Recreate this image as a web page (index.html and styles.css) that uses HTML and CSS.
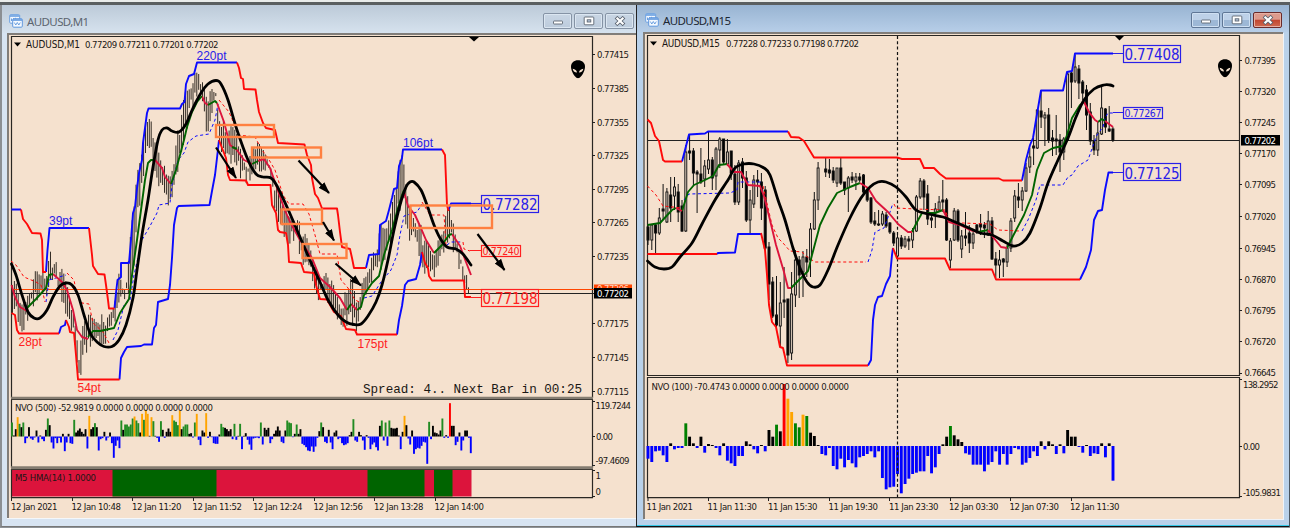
FILE: index.html
```
<!DOCTYPE html>
<html lang="en">
<head>
<meta charset="UTF-8" />
<meta name="viewport" content="width=device-width, initial-scale=1" />
<title>AUDUSD</title>
<link rel="stylesheet" href="styles.css">
</head>
<body>
<svg class="defs" width="0" height="0">
  <symbol id="ico-chart" viewBox="0 0 14 14">
    <rect x=".7" y=".7" width="10" height="8.5" rx="1" fill="#f4f9ff" stroke="#6a9fe0" />
    <path d="M1 2h9.500" stroke="#6a9fe0" stroke-width="1.600" />
    <path d="M2.500 7V4.500M4.500 6V4M6.500 5V3.800" stroke="#6a9fe0" />
    <rect x="3.700" y="4.700" width="9.600" height="8.500" rx="1" fill="#f4f9ff" stroke="#5f97dd" />
    <path d="M4 6h9" stroke="#5f97dd" stroke-width="1.600" />
    <path d="M5.300 8.500l1.500 2.500 1.500-2.500 1.500 2.500 1.500-2.500" fill="none" stroke="#5f97dd" stroke-width=".9" />
  </symbol>
  <symbol id="ico-min" viewBox="0 0 12 10">
    <rect x="1.500" y="5" width="9" height="3" rx=".6" fill="#fff" stroke="#5b6470" stroke-width=".9" />
  </symbol>
  <symbol id="ico-max" viewBox="0 0 12 10">
    <rect x="1.200" y="1" width="9.600" height="7.800" rx=".8" fill="#fff" stroke="#5b6470" stroke-width=".9" />
    <rect x="4.200" y="3.800" width="3.600" height="2.200" fill="#b9cbe0" stroke="#5b6470" stroke-width=".9" />
  </symbol>
  <symbol id="ico-close" viewBox="0 0 12 10">
    <path d="M2 1.200L10 8.800M10 1.200L2 8.800" stroke="#5b6470" stroke-width="3.800" />
    <path d="M2.600 1.800L9.400 8.200M9.400 1.800L2.600 8.200" stroke="#fff" stroke-width="2.200" />
  </symbol>
  <symbol id="alien" viewBox="0 0 14 18">
    <path d="M7 0C11 0 14 2.600 14 6.500C14 11 10 18 7 18S0 11 0 6.500C0 2.600 3 0 7 0Z" />
    <path d="M1.700 8.500C4 8.800 5.800 10 6 12.200C3.600 12.200 1.900 10.800 1.700 8.500ZM12.300 8.500C10 8.800 8.200 10 8 12.200C10.400 12.200 12.100 10.800 12.300 8.500Z" fill="#f5e1ce" />
  </symbol>
  <marker id="head" markerUnits="userSpaceOnUse" markerWidth="13" markerHeight="10" refX="11" refY="4" orient="auto">
    <path d="M0 0L12 4L0 8Z" />
  </marker>
</svg>

<main class="workspace">
  <section class="window window-m1">
    <header class="titlebar">
      <svg class="app-icon"><use href="#ico-chart" /></svg>
      <h1>AUDUSD,M1</h1>
      <div class="buttons">
        <button aria-label="Minimize"><svg><use href="#ico-min" /></svg></button>
        <button aria-label="Maximize"><svg><use href="#ico-max" /></svg></button>
        <button aria-label="Close"><svg><use href="#ico-close" /></svg></button>
      </div>
    </header>
    <div class="client">
      <svg class="pane" viewBox="9 35 626 363" width="626" height="363">
        <path class="frame" d="M11.500 398V36.500H592.500V398" />
        <path class="sep" d="M11 397.800H593" />
        <path class="tick" d="M592 54.500h3M592 88.500h3M592 122.500h3M592 155.500h3M592 189.500h3M592 222.500h3M592 256.500h3M592 323.500h3M592 357.500h3M592 391.500h3" />
        <path d="M469 37h10l-5 4.500z" />
        <path d="M14 42.500h7l-3.500 4z" />
        <text class="t head" x="26" y="47.500" textLength="54">AUDUSD,M1</text>
        <text class="t" x="85" y="47.500" textLength="133.500">0.77209 0.77211 0.77201 0.77202</text>
        <g class="t">
          <text x="597" y="58" textLength="32">0.77415</text>
          <text x="597" y="92" textLength="32">0.77385</text>
          <text x="597" y="126" textLength="32">0.77355</text>
          <text x="597" y="159" textLength="32">0.77325</text>
          <text x="597" y="193" textLength="32">0.77295</text>
          <text x="597" y="226" textLength="32">0.77265</text>
          <text x="597" y="260" textLength="32">0.77235</text>
          <text x="597" y="327" textLength="32">0.77175</text>
          <text x="597" y="361" textLength="32">0.77145</text>
          <text x="597" y="395" textLength="32">0.77115</text>
        </g>

        <g id="bars-m1" class="bars"></g>
        <path stroke="#ff4500" d="M12 289.500H594" />
        <path stroke="#222" d="M12 293.500H594" />

        <g class="dash up">
          <path d="M46 302L49 280L66 275M113 340L118 330L124 305L130 300L134 275L142 240L150 226L157 213L159 205L170 203L172 185L178 160L184 153L188 142L196 136L209 134L215 120L218 104" />
          <path d="M364 298L372 296L381 282L391 270L397 255L400 235L404 216L417 212L422 204M447 245L451 242L461 242" />
        </g>
        <g class="dash down">
          <path d="M11 261L16 265L24 277L36 282L41 285L45 302M67 273L74 280L77 295L82 303L89 304L93 323L103 332L109 343" />
          <path d="M219 100L229 112L239 135L255 137L262 150L268 158L275 170L283 195L289 204L303 204L309 214L315 235L320 254L337 254L341 280L348 288L355 300L362 303" />
          <path d="M422 202L430 215L444 215L446 245M463 242L464 249L470 251" />
        </g>

        <g class="hma fall">
          <path d="M11.500 285L15 297L20 307L27 311M53 274L62 282L67 290L73 310L77 330L82 337L88 339M155 160L162 168L165 177L171 184M202 96L205 103L208 105M217 103L224 122L230 145L237 150L244 160L252 164" />
          <path d="M258 161L264 159L270 168L276 185L284 208L290 222L300 240L312 258L320 278L330 287L340 298L347 310M351 304L357 310M404 192L408 206L415 215L420 226L426 240L434 253M452 234L460 246L466 262L471 275" />
        </g>
        <g class="hma rise">
          <path d="M27 308L36 299L46 288L49 275L53 274M88 337L93 331L100 331L114 328L120 313L129 299L132 275L137 240L141 210L145 180L148 163L151 160L155 160M171 184L176 170L180 155L184 140L187 127L192 112L197 102L202 96M208 105L215 101L217 103M232 147L237 149M252 164L258 161" />
          <path d="M347 310L351 304M357 310L361 307L364 295L372 283L379 276L384 255L392 230L398 208L402 195L404 190M434 253L442 245L449 235L452 234" />
        </g>

        <g class="band up">
          <path d="M11.500 209.500H21M46 272L47.500 250L49.500 228H89M114.500 308L116 293L117.500 280L121 277V263H129L131 240L133 213L135 207L137 188L139 173L142 160L143 143L147 113L148.500 108.500H180L182 104L184.500 102L186 84L189 76L194 74L197 62.500H237" />
          <path d="M366 268L369 255L379 254L380 225L386 221L389 210L392 198L394 189L397 188L399 166L402 158L403 149.500H442M448.500 210L451 203.500H471" />
          <path d="M59 333.500L61 327L65 325L66 320M119.500 379.500L121 358L124 352L127 347L141 346L144 344.500H152L154 328L156 325L158 302L168 299L170 285L172 258L174 225L177 208L178.500 206L209.500 205L212 191L215 175L217 158L219 140M397 334.500L399 320L402 306L405 285L408 281L416 279L420 265L422 252" />
        </g>
        <g class="band down">
          <path d="M21 209.500L23 219L27 224L32 233L40.500 233.500L42 240L43 272H46M89 228L92 255L93 266L98 274L104.500 274.500L106 285L108 300L109 308.500H114.500" />
          <path d="M237 62.500L239 68L241 78L243 79L244 89L255.500 89.500L257 100L259 112L263 123L266 128L275 130L278 143L304.500 144.500L307 155L311 165L312 178L315 194L318 198L322 208.500H337L338 215L340 232L342 247L350 249L352 258L354 268H366M442 149.500L445 155L446 180L447 205L448.500 211" />
          <path d="M11.500 313L15 315L17 330L19 333.500H59M66 320L69 327L70 332L74 333L76 355L78 379.500H119.500M219 140L222 148L226 158L228 175L230 180L246 180.500L248 185H270.500L272 205L276 213L278 230L280 232L286 233L288 245L289 262L301 263L304 272L314 273L316 285L320 299L327 299.500L334 312L341 316L346 329L355 330L357 334.500H397M422 252L425 263L428 268L429 276L432 280.500H464L465 297H471" />
        </g>
        <path class="ma" d="M11.500 264L16 275L22 295L28 312L34 318L40 318L47 310L53 297L60 286L66 283L72 285L78 295L84 315L90 333L97 342L104 346.500L112 346.500L119 340L126 325L133 298L137 270L142 235L148 200L153 167L158 140L162 130L167 128L172 131L179 132L186 124L193 108L201 93L208 84L216 80.500L221 84L228 100L237 130L248 160L256 174L263 177L271 178L277 186L287 207L297 230L309 258L320 282L328 300L338 315L346 322L354 324.500L361 324L368 316L376 302L382 285L388 260L394 230L400 205L406 187L410 182L414 182L421 190L427 205L434 225L440 238L447 247L456 249L463 254L471 265" />

        <g class="pt up-text">
          <text x="196.500" y="60">220pt</text>
          <text x="49" y="225">39pt</text>
          <text x="403" y="147">106pt</text>
        </g>
        <g class="pt down-text">
          <text x="18.500" y="346">28pt</text>
          <text x="77.500" y="392">54pt</text>
          <text x="357.500" y="347.500">175pt</text>
        </g>

        <g class="tag up-tag">
          <path d="M471 203.500H481" />
          <rect x="481.500" y="195.500" width="57" height="17" />
          <text class="big" x="482.500" y="209.500" textLength="55">0.77282</text>
        </g>
        <g class="tag down-tag">
          <path d="M470 250.500H481M470 297.500H481" />
          <rect x="481.500" y="245.500" width="39" height="11" />
          <text class="mid" x="482.500" y="254.800" textLength="37">0.77240</text>
          <rect x="481.500" y="289.500" width="57" height="17" />
          <text class="big" x="482.500" y="303.700" textLength="55">0.77198</text>
        </g>

        <g class="zone">
          <rect x="216" y="125" width="58" height="12" />
          <rect x="252" y="147.500" width="69" height="10" />
          <rect x="281.500" y="209.500" width="40.500" height="14.500" />
          <rect x="302.500" y="244" width="44" height="14" />
          <rect x="410.500" y="205.500" width="81.500" height="22.500" />
        </g>
        <g class="arrow">
          <path d="M216 147.500L236 178" />
          <path d="M298.500 160.500L329 193" />
          <path d="M323 222L334 240.500" />
          <path d="M335.500 263.500L361 285.500" />
          <path d="M477.500 234L504.500 270" />
        </g>

        <text class="spread" x="363" y="393" textLength="219">Spread: 4.. Next Bar in 00:25</text>
        <use href="#alien" x="571" y="60" width="14" height="18.500" />
        <rect x="594" y="284.500" width="38" height="6" fill="#ff4500" />
        <text class="t ask" x="597" y="291.500" textLength="32">0.77206</text>
        <rect x="594" y="288" width="38" height="10.500" />
        <text class="t now" x="597" y="297" textLength="32">0.77202</text>
      </svg>

      <svg class="pane" viewBox="9 398 626 70" width="626" height="70">
        <path class="frame" d="M11.500 400V468M11 399.500H593M592.500 399.500V468" />
        <path class="sep" d="M11 398.300H593M11 467.300H593" />
        <path class="tick" d="M592 401.500h3M592 436.500h3M592 465.500h3" />
        <g id="nvo-m1"></g>
        <text class="t" x="15" y="411" textLength="198">NVO (500) -52.9819 0.0000 0.0000 0.0000 0.0000</text>
        <text class="t" x="595.500" y="409" textLength="35.500">119.7244</text>
        <text class="t" x="596" y="440" textLength="17">0.00</text>
        <text class="t" x="595.500" y="464" textLength="34">-97.4609</text>
      </svg>

      <svg class="pane" viewBox="9 468 626 30" width="626" height="30">
        <rect class="fall-fill" x="12" y="470" width="459.500" height="26.500" />
        <path class="rise-fill" d="M112.500 470H216.500V496.500H112.500ZM367.500 470H424.500V496.500H367.500ZM434 470H452.500V496.500H434Z" />
        <path class="frame" d="M11.500 469V498M11 469.500H593M592.500 469.500V498M11 497.700H593" />
        <path class="sep" d="M11 468.200H593" />
        <path class="tick" d="M592 470.500h3M592 496.500h3" />
        <text class="t" x="15" y="481" textLength="81">M5 HMA(14) 1.0000</text>
        <text class="t" x="595.500" y="479">1</text>
        <text class="t" x="595.500" y="495">0</text>
      </svg>

      <svg class="pane" viewBox="9 498 626 20" width="626" height="20">
        <path class="tick" d="M11.500 498v3M72.500 498v3M132.500 498v3M193.500 498v3M253.500 498v3M314.500 498v3M374.500 498v3M435.500 498v3" />
        <g class="t">
          <text x="11" y="510" textLength="46.500">12 Jan 2021</text>
          <text x="71.500" y="510" textLength="49.500">12 Jan 10:48</text>
          <text x="132" y="510" textLength="49.500">12 Jan 11:20</text>
          <text x="192.500" y="510" textLength="49.500">12 Jan 11:52</text>
          <text x="253" y="510" textLength="49.500">12 Jan 12:24</text>
          <text x="313.500" y="510" textLength="49.500">12 Jan 12:56</text>
          <text x="374" y="510" textLength="49.500">12 Jan 13:28</text>
          <text x="434.500" y="510" textLength="49.500">12 Jan 14:00</text>
        </g>
      </svg>
    </div>
  </section>

  <section class="window window-m15 active">
    <header class="titlebar">
      <svg class="app-icon"><use href="#ico-chart" /></svg>
      <h1>AUDUSD,M15</h1>
      <div class="buttons">
        <button aria-label="Minimize"><svg><use href="#ico-min" /></svg></button>
        <button aria-label="Maximize"><svg><use href="#ico-max" /></svg></button>
        <button class="close" aria-label="Close"><svg><use href="#ico-close" /></svg></button>
      </div>
    </header>
    <div class="client">
      <svg class="pane" viewBox="645 34 638 342" width="638" height="342">
        <path class="frame" d="M647.500 375.500V35.500H1239.500V375.500Z" />
        <path class="tick" d="M1239 60.500h3M1239 91.500h3M1239 122.500h3M1239 153.500h3M1239 184.500h3M1239 216.500h3M1239 248.500h3M1239 279.500h3M1239 310.500h3M1239 341.500h3M1239 373.500h3" />
        <path d="M1115 36h9l-4.500 4.500z" />
        <path d="M650 41.500h7l-3.500 4z" />
        <text class="t head" x="662" y="46.500" textLength="58">AUDUSD,M15</text>
        <text class="t" x="726" y="46.500" textLength="133">0.77228 0.77233 0.77198 0.77202</text>
        <g class="t">
          <text x="1244.500" y="63.500" textLength="31.500">0.77395</text>
          <text x="1244.500" y="94.500" textLength="31.500">0.77320</text>
          <text x="1244.500" y="126" textLength="31.500">0.77245</text>
          <text x="1244.500" y="157" textLength="31.500">0.77170</text>
          <text x="1244.500" y="188" textLength="31.500">0.77095</text>
          <text x="1244.500" y="220" textLength="31.500">0.77020</text>
          <text x="1244.500" y="251.500" textLength="31.500">0.76945</text>
          <text x="1244.500" y="283" textLength="31.500">0.76870</text>
          <text x="1244.500" y="314" textLength="31.500">0.76795</text>
          <text x="1244.500" y="345" textLength="31.500">0.76720</text>
          <text x="1244.500" y="375.800" textLength="31.500">0.76645</text>
        </g>
        <path stroke="#222" d="M648 140.500H1239" />
        <path class="day" d="M897.500 36V375" />

        <g id="candles-m15" class="candles"></g>

        <g class="dash up">
          <path d="M684 200L689 194L730 193L737 190L738 182H761M868 262L872 250L875 232L884 228L890 212L893 203" />
          <path d="M1022 231L1028 220L1036 200L1040 185H1063L1068 177L1072 175L1078 166L1088 160L1095 140L1097 135L1103 127L1105 118L1108 113H1113" />
        </g>
        <g class="dash down">
          <path d="M647.500 186L656 195L663 206L682 208M763 186L772 225L778 238L783 243L790 251L802 252L806 256L815 262H866" />
          <path d="M894 204L896 208L916 209L945 210L950 222L962 223L990 224L998 230L1020 231" />
        </g>
        <g class="hma rise">
          <path d="M647.500 225L660 223L672 210L676 208M682 211L688 192L694 185L705 180L713 176L719 165L727 164M791 288L800 279L808 271L812 255L820 225L828 208L837 193L850 187L860 183M912 232L917 222L922 213L935 213L943 210M978 232L988 230" />
          <path d="M1007 248L1013 236L1024 215L1032 195L1037 170L1044 153L1053 148L1063 146L1067 135L1072 118L1080 105L1084 102M1098 122L1102 119L1105 121" />
        </g>
        <g class="hma fall">
          <path d="M676 208L682 211M727 164L734 172L741 172L748 185L760 186L764 196L770 220L776 245L784 272L788 288L791 288M860 183L868 188L876 201L888 212L898 224L908 232L912 232M943 210L949 222L960 225L970 230L978 232M988 230L993 237L1001 247L1007 248M1084 102L1089 112L1095 120L1098 122M1105 121L1113 127" />
        </g>
        <g class="band up">
          <path d="M682 161.500L685 150L689 134.500L705 133.500L708 131.500H788M1022 180.500L1026 160L1030 145L1033 138L1036 120L1041 90.500H1063L1067 72L1072 71L1075 53.500H1113" />
          <path d="M717 254L718 253L735 252.500L738 234H761M868 365.500L871 360L873 320L875 305L878 297L882 296L886 284L890 276L892 255L893 248M1080 279.500L1086 267L1091 250L1094 220L1098 211L1102 210L1105 190L1108.500 172.500H1113" />
        </g>
        <g class="band down">
          <path d="M647.500 119.500L651 123L655 136L659 141L663 160L665 161.500H682M788 131.500L791 137L799 137.500L804 141L814 157.500H897L902 159H920L924 168H934L940 174L946 178.500H999L1003 180.500H1022" />
          <path d="M647.500 254H717M761 233L765 250L767 275L769 305L772 322L776 327L780 347L783 348L787 365.500H868M893 248L897 258.500H945L950 269.500H992L996 279.500H1080" />
        </g>
        <path class="ma" d="M647.500 261L655 267L664 269L672 267L680 257L692 243L702 224L715 200L728 180L735 168L744 164L754 164L764 168L770 175L778 200L785 220L793 248L800 268L807 282L813 287L820 285L828 270L838 245L850 218L861 198L870 187L878 182L886 182L896 187L906 197L916 210L928 214L943 217L955 222L969 228L980 233L992 235L1003 241L1013 246L1022 243L1030 233L1040 208L1048 183L1058 160L1068 138L1076 117L1084 100L1094 89L1104 85L1110 85L1113 86" />

        <g class="tag up-tag">
          <path d="M1113 53.500H1123M1113 112.500H1123M1113 172.500H1123" />
          <rect x="1123.500" y="45.500" width="57" height="17" />
          <text class="big" x="1124.500" y="60" textLength="55">0.77408</text>
          <rect x="1123.500" y="107.500" width="39" height="11" />
          <text class="mid" x="1124.500" y="117" textLength="37">0.77267</text>
          <rect x="1123.500" y="163.500" width="57" height="17" />
          <text class="big" x="1124.500" y="178.500" textLength="55">0.77125</text>
        </g>
        <use href="#alien" x="1218" y="59" width="14" height="18.500" />
        <rect x="1241" y="135" width="39" height="10.500" />
        <text class="t now" x="1244.500" y="144" textLength="31.500">0.77202</text>
      </svg>

      <svg class="pane" viewBox="645 376 638 122" width="638" height="122">
        <path class="frame" d="M647.500 497.700V377.500H1239.500V497.700Z" />
        <path class="tick" d="M1239 379.500h3M1239 446.500h3M1239 496.500h3" />
        <g id="nvo-m15"></g>
        <path class="day" d="M897.500 378V497" />
        <text class="t" x="651.500" y="389.500" textLength="197.500">NVO (100) -70.4743 0.0000 0.0000 0.0000 0.0000</text>
        <text class="t" x="1243" y="387.500" textLength="35.500">138.2952</text>
        <text class="t" x="1243" y="450" textLength="17">0.00</text>
        <text class="t" x="1243" y="495.500" textLength="38">-105.9831</text>
      </svg>

      <svg class="pane" viewBox="645 498 638 21" width="638" height="21">
        <path class="tick" d="M648 498v3M708.500 498v3M768.500 498v3M829.500 498v3M889.500 498v3M950.500 498v3M1010.500 498v3M1071.500 498v3" />
        <g class="t">
          <text x="646.500" y="510" textLength="46.500">11 Jan 2021</text>
          <text x="707.500" y="510" textLength="49.500">11 Jan 11:30</text>
          <text x="768" y="510" textLength="49.500">11 Jan 15:30</text>
          <text x="828.500" y="510" textLength="49.500">11 Jan 19:30</text>
          <text x="889" y="510" textLength="49.500">11 Jan 23:30</text>
          <text x="949" y="510" textLength="49.500">12 Jan 03:30</text>
          <text x="1009.500" y="510" textLength="49.500">12 Jan 07:30</text>
          <text x="1070" y="510" textLength="49.500">12 Jan 11:30</text>
        </g>
      </svg>
    </div>
  </section>
</main>
<script src="charts.js"></script>
</body>
</html>
```

FILE: styles.css
```
* {
  box-sizing: border-box;
}
body {
  margin: 0;
  background: #e9ecea;
  font-family: "DejaVu Sans Condensed", "DejaVu Sans", sans-serif;
  overflow: hidden;
}
.defs {
  position: absolute;
}
.workspace {
  display: flex;
  height: 526px;
  margin-top: 2px;
  border-top: 3px solid #5a5f60;
  background: #8f9498;
}
.window {
  display: flex;
  flex-direction: column;
  height: 522px;
}
.window-m1 {
  width: 636px;
  padding-left: 5px;
  background: #d7e4f2;
  border-left: 2px solid #8b8f93;
  border-bottom: 1px solid #777;
}
.window-m15 {
  width: 653px;
  padding: 0 6px;
  background: #b9d1ea;
  border-left: 1px solid #222;
  border-bottom: 1px solid #111;
  box-shadow: inset 0 -1px #35c8e8, 1px 0 #4a5560;
}
.titlebar {
  display: flex;
  align-items: center;
  height: 28px;
  margin: 0 0 0 -5px;
  padding: 4px 2px 0 7px;
  background: linear-gradient(#bccad8, #d6e2ee);
}
.active .titlebar {
  height: 27px;
  margin: 0 -6px;
  padding: 3px 7px 0 8px;
  background: linear-gradient(#98b4d2, #b7cee8);
}
.app-icon {
  width: 14px;
  height: 14px;
}
h1 {
  flex: 1;
  margin: 0 0 0 4px;
  font: 11.5px "Noto Sans", "Open Sans", sans-serif;
  letter-spacing: -0.6px;
  color: #5c6570;
}
.active h1 {
  color: #1c2733;
}
.buttons {
  display: flex;
  gap: 2px;
}
.buttons button {
  display: grid;
  place-items: center;
  width: 29px;
  height: 16px;
  padding: 0;
  border: 1px solid #8593a5;
  border-radius: 2px;
  background: linear-gradient(#c9d6e4, #bccbdc);
  box-shadow: inset 0 0 0 1px #dbe6f1;
}
.buttons svg {
  width: 12px;
  height: 10px;
}
.active .buttons button {
  border-color: #5f7796;
  background: linear-gradient(#bdd1e8 50%, #9db8d6 50%);
  box-shadow: inset 0 0 0 1px #cfe0f2;
}
.active .buttons .close {
  border-color: #6a2b2b;
  background: linear-gradient(#dd9a8c 45%, #c1452f 50%, #cf6a50);
  box-shadow: inset 0 0 0 1px #e6b0a4;
}
.client {
  display: flex;
  flex-direction: column;
  width: 629px;
  border: solid #817d79;
  border-width: 2px 0 0 2px;
  background: #f5e1ce;
  box-shadow: 0 1px #f4f7fa;
}
.active .client {
  width: 640px;
  box-shadow: 1px 1px #eef3f9;
}
.pane {
  display: block;
  flex: none;
  overflow: visible;
}

/* frames and axes */
.frame {
  fill: none;
  stroke: #2a2723;
  stroke-width: 1.2;
}
.sep {
  stroke: #857d72;
  stroke-width: 2;
}
.tick {
  stroke: #222;
}
.day {
  stroke: #111;
  stroke-width: 1.2;
  stroke-dasharray: 3 2.3;
}
.t {
  font-size: 9.5px;
  fill: #1a1714;
}
.head {
  font-size: 9.9px;
}
.now {
  fill: #fff;
}
.ask {
  fill: #ffd9c8;
}

/* price lines */
.band, .hma, .dash, .ma {
  fill: none;
  stroke-linejoin: round;
}
.band {
  stroke-width: 1.9;
}
.up {
  stroke: #0a0aff;
}
.down {
  stroke: #ff0a0a;
}
.hma {
  stroke-width: 1.9;
}
.rise {
  stroke: #006400;
}
.fall {
  stroke: #dc143c;
}
.dash {
  stroke-width: 1;
  stroke-dasharray: 3 2.6;
}
.ma {
  stroke: #000;
  stroke-width: 2.8;
  stroke-linecap: round;
}
.bars {
  stroke: #332c25;
  stroke-width: 1;
}
.candles {
  stroke: #111;
  stroke-width: 1;
}
.candles .bull {
  fill: #d8c8b8;
  stroke-width: 0.9;
}
.candles .bear {
  fill: #000;
}

/* labels and drawings */
.pt {
  font: 12px "Liberation Sans", Arial, sans-serif;
}
.up-text {
  fill: #2a20e8;
}
.down-text {
  fill: #ff2020;
}
.tag {
  fill: none;
  stroke-width: 1.2;
}
.tag text {
  stroke: none;
}
.big {
  font-size: 15px;
}
.mid {
  font-size: 10.5px;
}
.up-tag {
  stroke: #2a20e8;
}
.up-tag text {
  fill: #2a20e8;
}
.down-tag {
  stroke: #ff2020;
}
.down-tag text {
  fill: #ff2020;
}
.zone {
  fill: none;
  stroke: #ff8040;
  stroke-width: 2.4;
}
.arrow {
  fill: none;
  stroke: #000;
  stroke-width: 2.2;
}
.arrow path {
  marker-end: url(#head);
}
.spread {
  font: 12.6px "Liberation Mono", "Courier New", monospace;
  fill: #1a1714;
}
.fall-fill {
  fill: #dc143c;
}
.rise-fill {
  fill: #006400;
}
```

FILE: charts.js
```
const NS = "http://www.w3.org/2000/svg";
const COLORS = { k: "#000", g: "#228b22", o: "#ffa500", r: "#ff0000", b: "#0000ff" };

function add(parent, tag, attrs) {
  const el = document.createElementNS(NS, tag);
  for (const key in attrs) el.setAttribute(key, attrs[key]);
  parent.appendChild(el);
}

// round off the moving averages
document.querySelectorAll(".ma").forEach(path => {
  const p = path.getAttribute("d").slice(1).split("L").map(s => s.split(" ").map(Number));
  let d = `M${p[0]}`;
  for (let i = 0; i < p.length - 1; i++) {
    const a = p[i - 1] || p[i], b = p[i], c = p[i + 1], e = p[i + 2] || c;
    d += `C${b[0] + (c[0] - a[0]) / 6} ${b[1] + (c[1] - a[1]) / 6} ${c[0] - (e[0] - b[0]) / 6} ${c[1] - (e[1] - b[1]) / 6} ${c[0]} ${c[1]}`;
  }
  path.setAttribute("d", d);
});

// M1 price bars: x, high, low
const range = [
  [12,285,312],[17,287,310],[20,300,330],[24,295,325],[30,285,310],[36,275,300],[42,272,292],[46,280,295],
  [50,240,275],[53,262,275],[58,270,292],[63,275,302],[68,285,320],[73,310,330],[76,322,345],[79,350,379],
  [84,325,355],[90,318,345],[96,315,340],[104,314,340],[110,320,335],[114,305,325],[119,272,300],[124,285,296],
  [128,265,290],[132,225,285],[138,172,215],[142,150,190],[146,112,150],[151,112,150],[156,150,170],[161,160,190],
  [167,175,205],[171,168,200],[176,145,178],[181,118,150],[186,92,130],[190,85,110],[194,72,105],[198,63,90],
  [202,80,100],[207,103,132],[212,92,108],[216,90,105],[219,112,150],[224,122,150],[230,132,160],[236,128,158],
  [241,150,175],[247,160,182],[253,152,175],[258,147,168],[265,147,165],[270,157,180],[275,182,208],[280,200,225],
  [288,215,240],[295,212,235],[302,235,262],[310,245,268],[318,270,295],[326,278,298],[335,290,312],[342,302,322],
  [350,276,320],[357,304,330],[363,278,300],[370,258,278],[376,257,275],[381,228,268],[386,225,255],[392,197,235],
  [398,172,210],[403,155,200],[408,202,240],[414,212,235],[420,227,255],[427,247,275],[433,252,279],[440,232,258],
  [446,215,243],[450,212,232],[455,237,255],[460,250,270],[464,262,282],[467,277,295],[472,285,296]
];
const bars = document.getElementById("bars-m1");
let d = "", seg = 0, n = 0;
for (let x = 12.5; x < 472; x += 1.9, n++) {
  while (seg < range.length - 2 && range[seg + 1][0] < x) seg++;
  const [a, b] = [range[seg], range[seg + 1]];
  const k = (x - a[0]) / (b[0] - a[0]);
  const hi = a[1] + (b[1] - a[1]) * k + [0, 7, -3, 10, 3, -5, 8, 1][(n * 5 + (n >> 3)) % 8];
  const lo = a[2] + (b[2] - a[2]) * k + [2, -6, 4, -2, -9, 5, -4][(n * 3 + (n >> 2)) % 7];
  if (lo > hi) d += `M${x.toFixed(1)} ${hi.toFixed(1)}V${lo.toFixed(1)}`;
}
add(bars, "path", { d });

// M15 candles: high, body top, body bottom, low, 1 = bear
const candles = [
  [225,227,240,245,1],[225,225,240,250,0],[224,225,233,253,1],[208,218,233,235,0],[184,209,211,220,1],[188,192,222,223,0],
  [177,195,208,222,1],[177,187,196,210,0],[184,192,212,222,1],[200,206,231,232,1],[145,152,231,232,0],[134,151,153,160,1],
  [148,151,173,186,1],[170,172,174,213,1],[148,174,182,184,1],[160,166,179,187,0],[132,160,169,174,0],[157,160,178,190,1],
  [147,149,176,190,0],[137,139,150,168,0],[139,139,162,165,1],[139,152,164,166,0],[151,151,173,180,1],[165,174,202,205,1],
  [160,163,202,205,0],[158,162,178,188,1],[171,178,220,222,1],[190,200,220,233,0],[175,180,204,208,0],[170,180,182,197,1],
  [173,182,208,220,1],[186,190,248,250,1],[242,247,284,300,1],[277,282,316,318,1],[276,315,325,327,1],[282,303,326,347,0],
  [267,300,302,318,1],[299,299,355,363,1],[272,294,353,360,0],[250,260,295,307,0],[256,260,275,298,1],[251,257,272,297,0],
  [249,257,262,277,1],[223,229,260,277,0],[192,200,229,230,0],[162,168,200,210,0],null,[158,169,172,177,1],
  [159,170,173,178,1],[167,171,180,183,1],[168,168,183,187,0],[158,168,183,185,1],[182,182,190,195,1],[176,178,188,212,0],
  [172,177,180,183,1],[173,177,181,190,0],[173,177,180,182,1],[174,175,192,193,1],[188,190,200,202,1],[197,198,222,224,1],
  [212,221,224,226,1],[210,224,225,226,1],[211,214,224,226,0],[212,215,226,228,1],[222,223,232,234,1],[231,233,243,246,1],
  [235,238,256,258,0],[235,238,246,249,1],[236,239,246,248,0],[236,239,241,250,1],[228,231,240,248,0],[195,197,231,232,0],
  [178,181,197,199,0],[179,181,197,210,1],[185,194,219,225,1],[216,218,220,228,1],[203,209,213,228,0],[196,202,210,212,0],
  [180,200,202,212,1],[198,200,240,241,1],[238,241,260,268,0],[208,211,240,241,0],[209,211,240,242,1],[230,236,249,258,0],
  [212,236,238,246,1],[225,233,243,253,1],[231,234,243,249,0],[224,225,232,234,1],[214,224,227,235,1],[222,225,228,238,1],
  [211,221,235,236,0],[217,221,259,260,1],[252,259,265,278,1],[250,260,265,278,0],[258,259,262,277,1],[245,248,262,267,0],
  [218,221,248,252,0],[190,196,218,222,0],[183,197,200,208,1],[187,191,200,211,0],[163,168,191,192,0],[148,157,167,173,0],
  [138,146,148,165,1],[109,110,148,149,0],[90,111,117,128,1],[112,115,118,146,0],[108,115,140,143,1],[130,138,141,156,1],
  [115,139,141,155,1],[134,140,152,172,1],[137,139,152,160,0],[72,74,140,141,0],[72,73,82,108,1],[55,67,81,83,0],
  [65,69,83,99,1],[80,82,93,100,1],[85,90,115,130,1],[103,112,141,145,1],[135,141,150,155,1],[122,133,150,156,0],
  [87,108,134,135,0],[108,109,127,133,1],[106,129,131,132,1],[127,129,140,142,1]
];
const group = document.getElementById("candles-m15");
candles.forEach((c, i) => {
  if (!c) return;
  const x = 648 + i * 3.78;
  add(group, "path", { d: `M${x.toFixed(1)} ${c[0]}V${c[3]}` });
  add(group, "rect", { x: (x - 1).toFixed(1), y: c[1], width: 2, height: c[2] - c[1], class: c[4] ? "bear" : "bull" });
});

// histogram values are in thirds of a pixel; no letter = positive black, negative is always blue
function histogram(id, list, from, to, base, width) {
  const g = document.getElementById(id);
  const items = list.trim().split(/\s+/);
  const step = (to - from) / (items.length - 1);
  items.forEach((item, i) => {
    const letter = COLORS[item[0]] ? item[0] : "k";
    const v = parseFloat(item.replace(/^[a-z]/, ""));
    const h = Math.abs(v) / 3;
    add(g, "rect", {
      x: (from + i * step - width / 2).toFixed(2),
      y: (v < 0 ? base : base - h).toFixed(2),
      width, height: h.toFixed(2),
      fill: v < 0 ? COLORS.b : COLORS[letter]
    });
  });
}

histogram("nvo-m1", `
  g42 3 22 o58 g38 28 g42 -20 -5 28 -6 -10 -3 18 -18 3 -8 -14 20 g54 34 -18 -36 -5 -20 -4 -18 8 -44 -18 8 -20 -22
  g50 12 18 24 14 8 22 -36 o62 22 28 g40 28 -42 -8 -5 14 -12 -3 12 -20 -64 -28 -12 -35 g48 20 g36 g36 g30 g36 g54
  o60 g48 g40 12 o68 g50 o80 o68 2 o58 g46 2 -4 -16 g46 20 -4 14 24 14 o64 g48 g44 g34 o78 22 g30 g36 g36 8 10 -3
  g42 o68 -10 -26 18 12 o70 -4 14 -2 -20 -22 -22 6 g38 g28 26 22 16 22 -8 g38 -10 2 g38 -38 2 10 -10 -24 -40 -6 -4
  -3 -5 g42 -24 26 20 26 -20 -8 8 18 30 18 -16 -20 18 g48 g42 g40 -2 8 g36 8 22 -22 -26 -32 -42 -44 -30 -46 -30 -4 16
`, 12, 319.3, 436.5, 1.9);
histogram("nvo-m1", `
  g42 28 -16 -20 20 -18 -38 12 18 -8 -4 -20 -26 -24 -20 4 14 g52 -12 -16 14 4 -12 -40 4 -4 -38 -24 -18 -32 -42 32
  g48 -12 g42 -28 g48 26 24 24 26 3 -38 14 o62 34 -6 -24 18 -52 -38 -34 -36 -28 -16 -18 -82 g44 -8 32 12 10 6 18 g54
  -4 4 -4 r100 32 32 -26 -16 12 -42 -12 18 18 -4 -50
`, 321.2, 470.8, 436.5, 1.9);
COLORS.g = "#008000";
histogram("nvo-m15", `
  -38 -48 -16 -14 -28 -48 8 -10 -6 -6 g68 28 8 -6 28 -20 6 3 -6 -28 8 -44 -52 -60 -30 -30 14 5 -10 -22 3 -16 48 28
  g64 44 r186 o142 o102 g68 g56 o94 g90 40 30 3 -24 -28 -6 -60 -70 -38 -64 -42 -52 -64 -34 -30 -24 -16 -34 -16 -96
  -130 -124 -122 -84 -142 -114 -98 -84 -80 -76 -76 -30 -82 -64 -24 5 28 g60 32 20 12 -22 -26 -56 -56 -56 -76
  -56 -48 -16 -56 -24 -56 -24 -6 -10 -56 -50 -36 -16 -30 14 -10 14 5 -24 5 -22 48 28 28 -3 -20 3 -30 -22 -24 8 -34 8 -104
`, 648, 1113, 446, 2.9);
```
